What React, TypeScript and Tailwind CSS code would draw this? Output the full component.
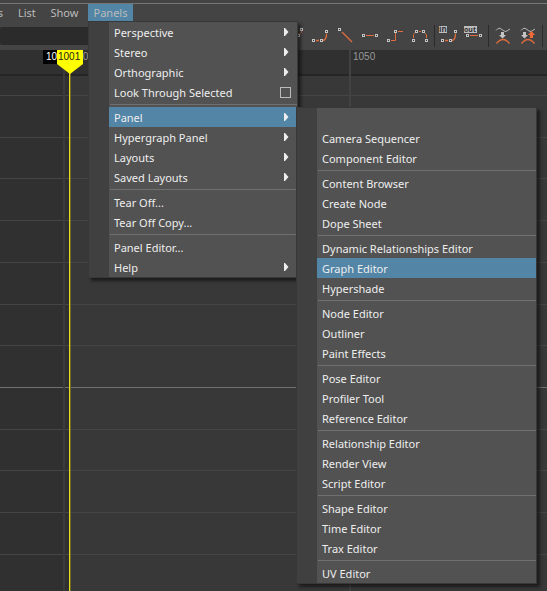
import React from 'react';
import clsx from 'clsx';

type Item = {
  label: string;
  arrow?: boolean;
  box?: boolean;
  active?: boolean;
  submenu?: Item[][];
};

const EDITORS: Item[][] = [
  [{ label: '' }, { label: 'Camera Sequencer' }, { label: 'Component Editor' }],
  [{ label: 'Content Browser' }, { label: 'Create Node' }, { label: 'Dope Sheet' }],
  [{ label: 'Dynamic Relationships Editor' }, { label: 'Graph Editor', active: true }, { label: 'Hypershade' }],
  [{ label: 'Node Editor' }, { label: 'Outliner' }, { label: 'Paint Effects' }],
  [{ label: 'Pose Editor' }, { label: 'Profiler Tool' }, { label: 'Reference Editor' }],
  [{ label: 'Relationship Editor' }, { label: 'Render View' }, { label: 'Script Editor' }],
  [{ label: 'Shape Editor' }, { label: 'Time Editor' }, { label: 'Trax Editor' }],
  [{ label: 'UV Editor' }],
];

const PANELS: Item[][] = [
  [
    { label: 'Perspective', arrow: true },
    { label: 'Stereo', arrow: true },
    { label: 'Orthographic', arrow: true },
    { label: 'Look Through Selected', box: true },
  ],
  [
    { label: 'Panel', arrow: true, active: true, submenu: EDITORS },
    { label: 'Hypergraph Panel', arrow: true },
    { label: 'Layouts', arrow: true },
    { label: 'Saved Layouts', arrow: true },
  ],
  [{ label: 'Tear Off...' }, { label: 'Tear Off Copy...' }],
  [{ label: 'Panel Editor...' }, { label: 'Help', arrow: true }],
];

const MenuRow: React.FC<{ item: Item }> = ({ item }) => {
  if (!item.label) return <li className="h-5" />;
  return (
    <li className={clsx('relative flex h-5 items-center', item.active && 'bg-[#5285a6]')}>
      <button className="flex h-5 flex-1 items-center pt-0.5 pl-[5px] text-left whitespace-nowrap">{item.label}</button>
      {item.arrow && (
        <svg className="mr-2 h-2 w-[5px]" viewBox="0 0 5 8" fill="#eee">
          <path d="M0 0H1L4.500 4L1 8H0Z" />
        </svg>
      )}
      {item.box && (
        <input
          type="checkbox"
          aria-label={`${item.label} options`}
          className="mr-1.5 size-[11px] appearance-none border border-[#bbb]"
        />
      )}
      {item.submenu && <Menu groups={item.submenu} className="top-0 left-[187px] w-[241px]" />}
    </li>
  );
};

const Menu: React.FC<{ groups: Item[][]; className: string }> = ({ groups, className }) => (
  <div
    className={clsx(
      'absolute z-10 border border-[#383838] bg-[#525252] text-[#eee] shadow-[3px_3px_3px_rgba(0,0,0,0.5)]',
      className,
    )}
  >
    <div className="border-l-[20px] border-[#404040]">
      {groups.map((group, i) => (
        <React.Fragment key={i}>
          {i > 0 && (
            <div className="flex h-[5px] items-center">
              <hr className="ml-px flex-1 border-[#707070]" />
            </div>
          )}
          <ul>
            {group.map((item) => (
              <MenuRow key={item.label} item={item} />
            ))}
          </ul>
        </React.Fragment>
      ))}
    </div>
  </div>
);

const MenuBar = () => (
  <nav className="flex h-[18px] items-center text-[#bbb]">
    <button className="-ml-[52px] w-[55px] text-right">Curves</button>
    <button className="ml-[15px] w-[17px]">List</button>
    <button className="ml-[15px] w-[29px]">Show</button>
    <div className="relative ml-[9px]">
      <button className="h-[18px] w-[45px] bg-[#5285a6]">Panels</button>
      <Menu groups={PANELS} className="top-[17px] left-0 w-[210px]" />
    </div>
  </nav>
);

const Keys: React.FC<{ at: number[][] }> = ({ at }) => (
  <>
    {at.map(([x, y]) => (
      <g key={`${x}-${y}`}>
        <rect x={x - 1} y={y - 1} width="3" height="3" fill="#c4c4c4" />
        <rect x={x} y={y} width="1" height="1" fill="#333" />
      </g>
    ))}
  </>
);

const Tool: React.FC<{ name: string; children: React.ReactNode }> = ({ name, children }) => (
  <button aria-label={name} className="h-6 w-[25px] shrink-0">
    <svg width="25" height="24" viewBox="0 0 25 24" fill="none">
      {children}
    </svg>
  </button>
);

const Divider = () => <span className="mr-0.5 ml-px h-[22px] w-px shrink-0 bg-[#2b2b2b]" />;

const WAVE = 'M5 6.5L7 4.5Q9 3.500 11 5.5T15 7.500L19 5';
const ARC = 'M5.500 19.500Q12 11.500 18.500 19.500';
const SPLINE = 'M8 16.5H11M15 16.500Q18.500 16 18.500 9.500';

const Toolbar = () => (
  <div className="flex h-7 items-center overflow-hidden">
    <input aria-label="Stats" className="h-[18px] w-[230px] shrink-0 rounded-xs bg-[#2b2b2b] px-1" />
    <div className="ml-[53px] flex items-center">
      <Tool name="Auto tangents">
        <path d="M15.500 10Q18.500 11 18.500 7" stroke="#e06c3c" strokeDasharray="2 1" />
        <Keys at={[[15, 11], [18, 5]]} />
      </Tool>
      <Tool name="Spline tangents">
        <path d={SPLINE} stroke="#e06c3c" strokeWidth="1.300" />
        <Keys at={[[5, 16], [13, 16], [18, 7]]} />
      </Tool>
      <Tool name="Linear tangents">
        <path d="M9 8L19 18" stroke="#e06c3c" strokeWidth="1.3" />
        <Keys at={[[6, 5]]} />
      </Tool>
      <Tool name="Flat tangents">
        <path d="M8 11.5H16" stroke="#e06c3c" />
        <Keys at={[[5, 11], [18, 11]]} />
      </Tool>
      <Tool name="Stepped tangents">
        <path d="M8 16.5H12.5V9M15 7.5H20" stroke="#e06c3c" />
        <Keys at={[[5, 16], [12, 7]]} />
      </Tool>
      <Tool name="Plateau tangents">
        <path d="M5.5 14V11M5.500 10.500L7 8.500M11 7.500H13M17 9L18.500 11V14" stroke="#e06c3c" />
        <Keys at={[[5, 16], [8, 7], [15, 7], [18, 16]]} />
      </Tool>
      <Divider />
      <Tool name="In tangents">
        <rect x="2" y="2" width="8" height="7" fill="#bdbdbd" />
        <text x="2" y="8" fontSize="8" fontWeight="bold" fill="#333">in</text>
        <path d={SPLINE} stroke="#e06c3c" strokeWidth="1.300" />
        <Keys at={[[5, 16], [13, 16], [18, 7]]} />
      </Tool>
      <Tool name="Out tangents">
        <rect x="2" y="2" width="13" height="7" fill="#bdbdbd" />
        <text x="2" y="8" fontSize="7" fontWeight="bold" fill="#333">out</text>
        <path d="M8 11.5H16" stroke="#e06c3c" />
        <Keys at={[[5, 11], [18, 11]]} />
      </Tool>
      <Divider />
      <Tool name="Buffer curve snapshot">
        <path d={WAVE} stroke="#b5b5b5" />
        <path d={ARC} stroke="#e06c3c" strokeWidth="1.3" />
        <path d="M10 8H13V11H15L11.500 14.500L8 11H10Z" fill="#c4c4c4" />
      </Tool>
      <Tool name="Swap buffer curve">
        <path d={WAVE} stroke="#b5b5b5" />
        <path d={ARC} stroke="#e06c3c" strokeWidth="1.3" />
        <path d="M7 8H10V11H12L8.5 14.500L5 11H7Z" fill="#c4c4c4" />
        <path d="M14 14H17V11H19L15.500 7L12 11H14Z" fill="#f06a38" />
      </Tool>
      <Divider />
    </div>
  </div>
);

// value lines of the curve view, the brighter one is zero
const LINES = [20, 62, 103, 145, 187, 229, 270, 354, 395, 437, 479];

const GraphView = () => (
  <main className="flex-1 overflow-hidden bg-[#383838] font-['Liberation_Sans',sans-serif] text-[10px] leading-[14px]">
    <svg className="block h-full w-full">
      <rect width="70" height="100%" fill="#303030" />
      <rect width="100%" height="25" fill="#303030" />
      <rect y="24" width="100%" height="2" fill="#252525" />
      {LINES.map((y) => (
        <rect key={y} y={y + 25} width="100%" height="1" fill="#454545" />
      ))}
      <rect y="337" width="100%" height="1" fill="#707070" />
      <rect x="63" width="2" height="100%" fill="#3b3b3b" />
      <rect x="349" width="2" height="100%" fill="#424242" />
      <text x="66" y="10" fill="#999">1000</text>
      <text x="353" y="10" fill="#999">1050</text>
      <rect x="43" width="20" height="14" fill="#000" />
      <text x="46" y="10" fill="#fff">1001</text>
      <rect x="69" y="20" width="1" height="100%" fill="#e6dc1e" />
      <rect x="70" y="20" width="1" height="100%" fill="#6f6b24" />
      <path d="M57 0H83V14L70 24L57 14Z" fill="#ff0" />
      <text x="58" y="10" fill="#222">1001</text>
    </svg>
  </main>
);

export default function App() {
  return (
    <div className="flex h-screen flex-col overflow-hidden bg-[#444] font-['Noto_Sans',sans-serif] text-[11px] leading-4">
      <header>
        <div className="h-1 border-b border-[#777]" />
        <MenuBar />
        <Toolbar />
      </header>
      <GraphView />
    </div>
  );
}
